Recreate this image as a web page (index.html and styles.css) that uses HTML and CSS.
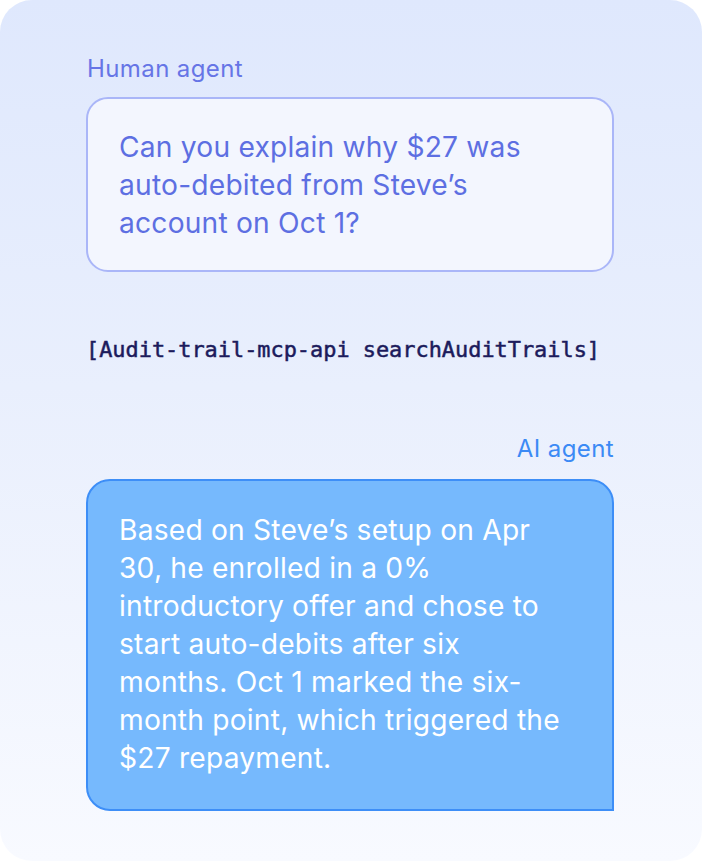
FILE: index.html
```html
<!DOCTYPE html>
<html lang="en">
<head>
<meta charset="utf-8">
<title>Audit trail chat</title>
<link rel="stylesheet" href="styles.css">
</head>
<body>
<main class="card">
  <section class="turn turn-human">
    <div class="label label-human">Human agent</div>
    <div class="bubble bubble-human">Can you explain why $27 was<br>auto-debited from Steve’s<br>account on Oct 1?</div>
  </section>
  <div class="tool-call">[Audit-trail-mcp-api searchAuditTrails]</div>
  <section class="turn turn-ai">
    <div class="label label-ai">AI agent</div>
    <div class="bubble bubble-ai">Based on Steve’s setup on Apr<br>30, he enrolled in a 0%<br>introductory offer and chose to<br>start auto-debits after six<br>months. Oct 1 marked the six-<br>month point, which triggered the<br>$27 repayment.</div>
  </section>
</main>
</body>
</html>
```

FILE: styles.css
```css
html, body {
  margin: 0;
  padding: 0;
  background: #ffffff;
}
body {
  width: 702px;
  height: 861px;
  overflow: hidden;
}
.card {
  box-sizing: border-box;
  width: 702px;
  height: 861px;
  border-radius: 32px;
  background: linear-gradient(180deg, #dfe8fd 0%, #e9effd 45%, #f8faff 100%);
  padding: 54px 88px 0 86px;
  display: flex;
  flex-direction: column;
  font-family: Inter, "Noto Sans", sans-serif;
}
.turn {
  display: flex;
  flex-direction: column;
}
.label {
  font-size: 24px;
  line-height: 30px;
  letter-spacing: 0.4px;
}
.label-human {
  color: #6675e6;
  padding-left: 1px;
}
.label-ai {
  color: #3b8af5;
  text-align: right;
}
.bubble {
  font-size: 28.2px;
  line-height: 38px;
  letter-spacing: 0.2px;
}
.bubble-human {
  margin-top: 13px;
  border: 2px solid #aab6f8;
  border-radius: 22px;
  background: #f3f6fe;
  color: #5d6fe2;
  padding: 29px 20px 28px 31px;
}
.tool-call {
  margin-top: 63px;
  font-family: "DejaVu Sans Mono", "Liberation Mono", monospace;
  font-size: 21.9px;
  line-height: 30px;
  font-weight: normal;
  -webkit-text-stroke: 0.5px #1c1b5c;
  color: #1c1b5c;
}
.turn-ai {
  margin-top: 69px;
}
.bubble-ai {
  margin-top: 15px;
  border: 2px solid #3d8ef7;
  border-radius: 24px 24px 0 24px;
  background: #76b9fd;
  color: #ffffff;
  padding: 30px 14px 32px 31px;
}
```
